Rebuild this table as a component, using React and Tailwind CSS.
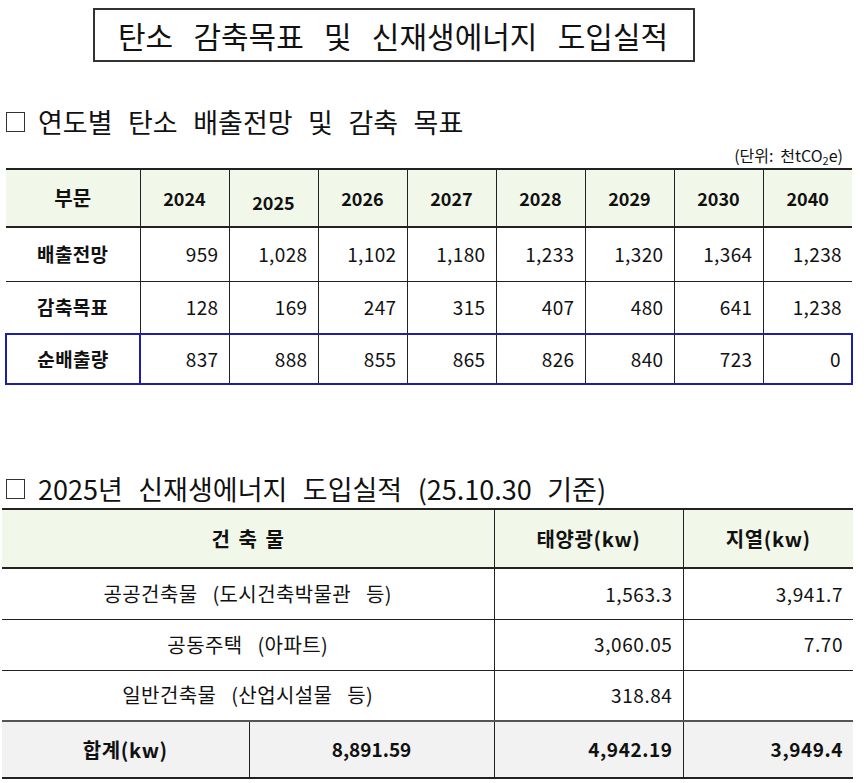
const years = ['2024', '2025', '2026', '2027', '2028', '2029', '2030', '2040'];

const emissionRows = [
  { label: '배출전망', values: ['959', '1,028', '1,102', '1,180', '1,233', '1,320', '1,364', '1,238'], h: 'h-[54px]' },
  { label: '감축목표', values: ['128', '169', '247', '315', '407', '480', '641', '1,238'], h: 'h-[53px]' },
];

const netRow = { label: '순배출량', values: ['837', '888', '855', '865', '826', '840', '723', '0'] };

const buildingRows = [
  { name: '공공건축물 (도시건축박물관 등)', solar: '1,563.3', geo: '3,941.7' },
  { name: '공동주택 (아파트)', solar: '3,060.05', geo: '7.70' },
  { name: '일반건축물 (산업시설물 등)', solar: '318.84', geo: '' },
];

function SectionTitle({ children, className = '' }) {
  return (
    <div className={`flex items-center pl-[6px] text-[27px] leading-none text-[#111] [word-spacing:0.35em] ${className}`}>
      <span className="mr-[13px] inline-block w-[19px] h-[20px] border border-[#333]" />
      <span>{children}</span>
    </div>
  );
}

export default function App() {
  return (
    <div className="w-[865px] h-[783px] bg-white overflow-hidden font-['Noto_Sans_CJK_KR',sans-serif] text-[#111]">
      {/* Title box */}
      <div className="pt-[8px] pl-[93px]">
        <div className="w-[602px] h-[54px] border-2 border-[#333] flex items-center pl-[23px] text-[30px] leading-none [word-spacing:0.45em]">
          탄소 감축목표 및 신재생에너지 도입실적
        </div>
      </div>

      {/* Section 1 */}
      <SectionTitle className="mt-[46px]">연도별 탄소 배출전망 및 감축 목표</SectionTitle>
      <div className="mt-[12px] pr-[22px] text-right text-[16px] leading-none [word-spacing:0.2em]">
        (단위: 천tCO<sub className="text-[11px]">2</sub>e)
      </div>

      <table className="mt-[5px] ml-[5px] w-[846px] table-fixed border-collapse">
        <colgroup>
          <col className="w-[134px]" />
          {years.map((y) => (
            <col key={y} className="w-[89px]" />
          ))}
        </colgroup>
        <thead>
          <tr className="h-[58px] bg-[#f2f8e9]">
            <th className="border-y-2 border-[#222] text-[20px] font-bold">부문</th>
            {years.map((y) => (
              <th
                key={y}
                className={`border-y-2 border-l border-[#222] text-[18px] font-bold ${y === '2025' ? 'pt-[8px]' : ''}`}
              >
                {y}
              </th>
            ))}
          </tr>
        </thead>
        <tbody>
          {emissionRows.map((row) => (
            <tr key={row.label} className={row.h}>
              <td className="border-b border-[#222] text-center text-[19px] font-bold tracking-[0.02em]">{row.label}</td>
              {row.values.map((v, i) => (
                <td key={i} className="border-b border-l border-[#222] pr-[10px] text-right text-[19px] tracking-[0.02em]">
                  {v}
                </td>
              ))}
            </tr>
          ))}
          <tr className="h-[50px]">
            <td className="border-2 border-[#1f1fa3] text-center text-[19px] font-bold tracking-[0.02em]">{netRow.label}</td>
            {netRow.values.map((v, i) => (
              <td
                key={i}
                className={`border-y-2 border-y-[#1f1fa3] border-l border-l-[#222] pr-[10px] text-right text-[19px] tracking-[0.02em] ${
                  i === netRow.values.length - 1 ? 'border-r-2 border-r-[#1f1fa3]' : ''
                }`}
              >
                {v}
              </td>
            ))}
          </tr>
        </tbody>
      </table>

      {/* Section 2 */}
      <SectionTitle className="mt-[90px]">2025년 신재생에너지 도입실적 (25.10.30 기준)</SectionTitle>

      <table className="mt-[6px] ml-[2px] w-[851px] table-fixed border-collapse">
        <colgroup>
          <col className="w-[247px]" />
          <col className="w-[245px]" />
          <col className="w-[189px]" />
          <col className="w-[170px]" />
        </colgroup>
        <thead>
          <tr className="h-[59px] bg-[#f2f8e9]">
            <th colSpan={2} className="border-y-2 border-[#222] text-[20px] font-bold [word-spacing:0.2em]">
              건 축 물
            </th>
            <th className="border-y-2 border-l border-[#222] text-[20px] font-bold tracking-[0.03em]">태양광(kw)</th>
            <th className="border-y-2 border-l border-[#222] text-[20px] font-bold tracking-[0.03em]">지열(kw)</th>
          </tr>
        </thead>
        <tbody>
          {buildingRows.map((row) => (
            <tr key={row.name} className="h-[51px]">
              <td colSpan={2} className="border-b border-[#222] text-center text-[20px] tracking-[0.02em] [word-spacing:0.5em]">
                {row.name}
              </td>
              <td className="border-b border-l border-[#222] pr-[10px] text-right text-[19px] tracking-[0.03em]">{row.solar}</td>
              <td className="border-b border-l border-[#222] pr-[10px] text-right text-[19px] tracking-[0.03em]">{row.geo}</td>
            </tr>
          ))}
          <tr className="h-[57px] bg-[#f2f2f2]">
            <td className="border-t-2 border-t-[#555] border-b-2 border-b-[#222] text-center text-[20px] font-bold tracking-[0.03em]">
              합계(kw)
            </td>
            <td className="border-t-2 border-t-[#555] border-b-2 border-b-[#222] border-l border-l-[#222] text-center text-[19px] font-bold">
              8,891.59
            </td>
            <td className="border-t-2 border-t-[#555] border-b-2 border-b-[#222] border-l border-l-[#222] pr-[10px] text-right text-[19px] font-bold tracking-[0.03em]">
              4,942.19
            </td>
            <td className="border-t-2 border-t-[#555] border-b-2 border-b-[#222] border-l border-l-[#222] pr-[10px] text-right text-[19px] font-bold tracking-[0.03em]">
              3,949.4
            </td>
          </tr>
        </tbody>
      </table>
    </div>
  );
}
